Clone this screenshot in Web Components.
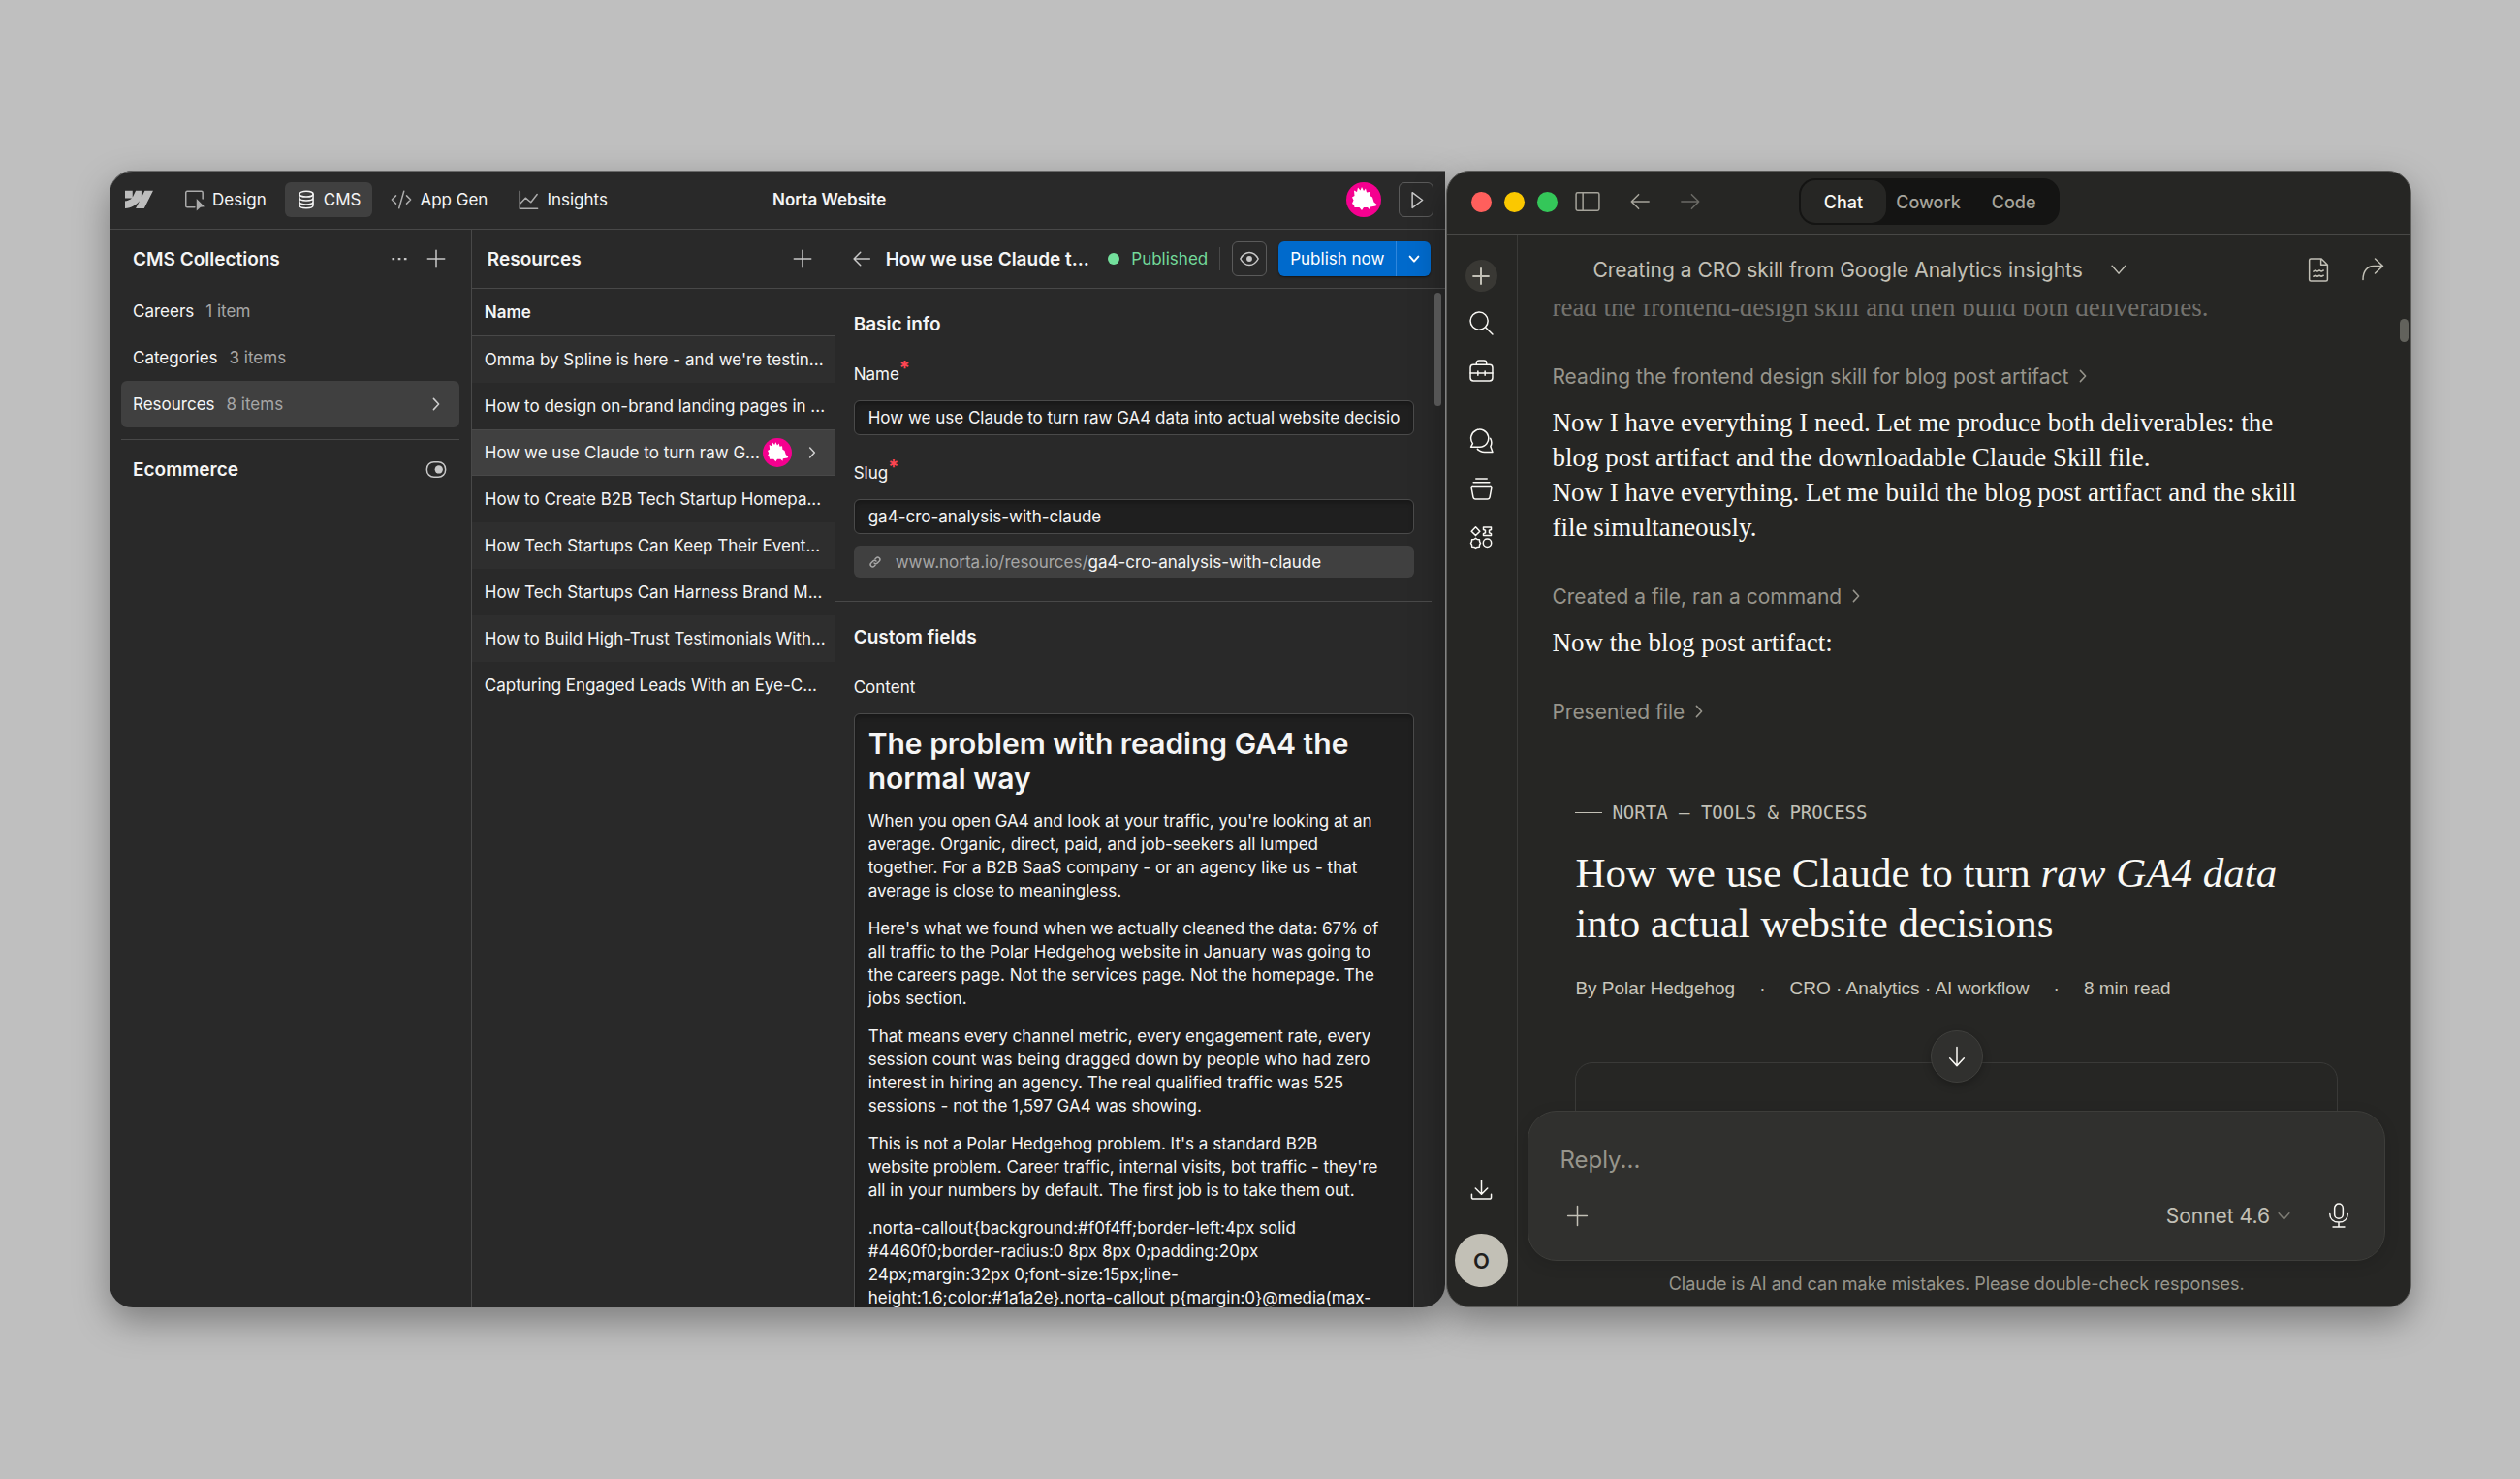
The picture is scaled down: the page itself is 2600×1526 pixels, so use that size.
<!DOCTYPE html>
<html lang="en">
<head>
<meta charset="utf-8">
<title>Norta Website</title>
<style>
  body {
    margin: 0;
    background: #bfbfbf;
    font-family: Inter, "Liberation Sans", sans-serif;
  }
  main {
    box-sizing: border-box;
    height: 100vh;
    padding: 176px 112px 177px 113px;
    display: grid;
    grid-template-columns: 1379fr 996fr;
    gap: 1px;
  }
</style>
</head>
<body>
<main>
  <cms-window></cms-window>
  <chat-window></chat-window>
</main>

<script>
const icons = {
  webflow: '<path fill="currentColor" stroke="none" transform="translate(0 4) scale(.0222)" d="M1080 0L735.386 673.684H411.695L555.916 394.481H549.445C430.464 548.934 252.942 650.61 0 673.684V398.344C0 398.344 161.813 388.787 256.938 288.776H0V0H288.771V237.515L295.252 237.489L413.255 0H631.645V236.009L638.126 235.999L760.556 0H1080Z"/>',
  design: '<path d="M13 20.500H4.500a1.500 1.500 0 0 1-1.500-1.500V4a1.500 1.500 0 0 1 1.500-1.500h16a1.500 1.500 0 0 1 1.500 1.500v7"/><path fill="currentColor" stroke="none" d="M15 11l9 9-4.500.5-4.500 4z"/>',
  database: '<ellipse cx="12" cy="5" rx="8.500" ry="3.500"/><path d="M3.500 5v14c0 2 3.800 3.500 8.500 3.500s8.500-1.500 8.500-3.500V5M3.500 9.700c0 2 3.800 3.500 8.500 3.500s8.500-1.500 8.500-3.500M3.500 14.400c0 2 3.800 3.500 8.500 3.500s8.500-1.500 8.500-3.500"/>',
  code: '<path d="M6 7.500L1.500 12 6 16.500M18 7.500l4.500 4.500-4.500 4.500M15 2.500L9.500 21.500"/>',
  chart: '<path d="M2.500 2.500v19.500h20M2.500 17l6.500-7 6 5 7-9"/>',
  play: '<path d="M7 3l12 9-12 9z"/>',
  dots: '<path fill="currentColor" stroke="none" d="M2 10.500h3.500v3H2zM10.300 10.500h3.500v3h-3.500zM18.500 10.500H22v3h-3.500z"/>',
  plus: '<path d="M12 2.500v19M2.500 12h19"/>',
  right: '<path d="M8.500 4.500l7 7.500-7 7.500"/>',
  down: '<path d="M4.500 8l7.500 8.500 7.500-8.500"/>',
  left: '<path d="M22 12H2.500M10.500 4l-8 8 8 8"/>',
  forward: '<path d="M2 12h19.500M13.500 4l8 8-8 8"/>',
  toggle: '<rect x="1.500" y="4" width="21" height="17" rx="8"/><circle cx="15" cy="12.500" r="4.500" fill="currentColor" stroke="none"/>',
  eye: '<path d="M2 12c2.500-4.700 6-7 10-7s7.500 2.300 10 7c-2.500 4.700-6 7-10 7s-7.500-2.300-10-7z"/><circle cx="12" cy="12" r="3.200" fill="currentColor" stroke="none"/>',
  link: '<path d="M10 14a4.500 4.500 0 0 0 6.500 0l4-4a4.600 4.600 0 0 0-6.500-6.500L12 5.500M14 10a4.500 4.500 0 0 0-6.500 0l-4 4a4.600 4.600 0 0 0 6.500 6.500l2-2"/>',
  panel: '<rect x="1" y="3.500" width="22" height="17" rx="1.500"/><path d="M7.500 3.500v17"/>',
  search: '<circle cx="9.700" cy="9.700" r="8.700"/><path d="M16 16l7 7"/>',
  briefcase: '<rect x="1" y="6" width="22" height="16" rx="3"/><path d="M7 6V4.500A2.500 2.500 0 0 1 9.500 2h5A2.500 2.500 0 0 1 17 4.500V6M1 14.500h22M8.500 12.500v4M15.500 12.500v4"/>',
  chats: '<path d="M1.500 17.500l1.800-3.500A8.700 8.700 0 1 1 10.500 17.500zM20.800 9c1.700 3 1.300 5.800.2 8l2 5.500H15c-3 0-5.500-1-7-3"/>',
  archive: '<path d="M6.500 2h11M4 5.500h16M3.500 9h17a1.500 1.500 0 0 1 1.500 1.700l-1.800 9.600a2 2 0 0 1-2 1.700H5.800a2 2 0 0 1-2-1.700L2 10.700A1.500 1.500 0 0 1 3.500 9z"/>',
  apps: '<path d="M6.500 1.800l4.300 4.400-4.300 4.400-4.300-4.400zM14.500 2h8v2.500l-2 .8v2.500l2 .8V10.500h-8V8.600l2-.8V5.300l-2-.8zM6.500 13.300l1.700 1.200 2.200.2.200 2.200.9 1.600-1 1.700-.2 2-2.100.2-1.700 1-1.700-1-2.100-.2-.2-2-1-1.700.9-1.600.2-2.200 2.200-.2z"/><circle cx="18.500" cy="18.300" r="4.200"/>',
  download: '<path d="M12 2v14.500M5.500 10.500l6.500 6.500 6.500-6.500M1.500 17v3a2 2 0 0 0 2 2h17a2 2 0 0 0 2-2v-3"/>',
  document: '<path d="M5 1h10.500l6 6v14.500a1.500 1.500 0 0 1-1.500 1.500H5a1.500 1.500 0 0 1-1.500-1.500v-19A1.500 1.500 0 0 1 5 1zM15 1.500V7h6M7.500 13.500l2-1 2 1 2-1 2 1 2-1M7.500 18.500l2-1 2 1 2-1 2 1 2-1"/>',
  share: '<path d="M2 22.500C2 14 6.500 8.500 13 8.500h9.500M14.500 1l8 7.500-8 7.500"/>',
  arrowdown: '<path d="M12 1.500v21M4 14l8 8.500 8-8.500"/>',
  mic: '<rect x="8" y="1" width="8" height="14" rx="4"/><path d="M3.500 10.500c0 5 3.500 8 8.500 8s8.500-3 8.500-8M12 18.500V23M6.500 23h11"/>',
  hedgehog: '<circle cx="12" cy="12" r="12" fill="#f5008f" stroke="none"/><path fill="#fff" stroke="none" transform="scale(.6667)" d="M8 8.500L11 10 12 5.500 14.500 8.500 16 5 18 9 20 6.500 21 10.500 24 10 24.500 14 27 15.500 28.500 20.500 31.500 23 30.500 24.500 25 25.500 24.500 28.500 22 26H18L16 29 13.500 26H8.500L8 23.500 6 22 7.500 18.500 6 15.500 8.500 14Z"/>'
};

class AppIcon extends HTMLElement {
  constructor() {
    super();
    this.attachShadow({ mode: 'open' });
  }
  connectedCallback() {
    const size = this.getAttribute('size') || 24;
    // keeps the drawn line near the wanted thickness at any size
    const stroke = (this.getAttribute('line') || 1.5) * 24 / size;
    this.shadowRoot.innerHTML = `
      <style>
        :host { display: inline-flex; flex: none; }
        svg { display: block; overflow: visible; fill: none; stroke: currentColor; stroke-linejoin: round; stroke-linecap: round; }
      </style>
      <svg width="${size}" height="${size}" viewBox="0 0 24 24" stroke-width="${stroke}" aria-hidden="true">${icons[this.getAttribute('name')]}</svg>
    `;
  }
}
customElements.define('app-icon', AppIcon);

class CmsTopbar extends HTMLElement {
  constructor() {
    super();
    this.attachShadow({ mode: 'open' });
  }
  connectedCallback() {
    this.shadowRoot.innerHTML = `
      <style>
        :host {
          display: grid;
          grid-template-columns: 684fr auto 577fr;
          align-items: center;
          height: 60px;
          border-bottom: 1px solid #484848;
        }
        nav, .actions { display: flex; align-items: center; }
        nav { gap: 7px; padding-left: 16px; }
        .logo { color: #bdbdbd; margin-right: 12px; display: flex; }
        nav button {
          display: flex;
          align-items: center;
          gap: 8px;
          height: 36px;
          padding: 0 12px;
          border: 0;
          border-radius: 6px;
          background: none;
          color: #f5f5f5;
          font: 17px Inter, sans-serif;
        }
        nav button app-icon { color: #ababab; }
        nav button[aria-current] { background: #404040; }
        nav button[aria-current] app-icon { color: #f5f5f5; }
        h1 { margin: 0; font-size: 17px; font-weight: 600; }
        .actions { justify-content: flex-end; gap: 18px; padding-right: 12px; }
        .play {
          display: grid;
          place-items: center;
          width: 36px;
          height: 36px;
          padding: 0;
          border: 1px solid #5a5a5a;
          border-radius: 6px;
          background: none;
          color: #c8c8c8;
        }
      </style>
      <nav>
        <a class="logo" href="#" aria-label="Home"><app-icon name="webflow" size="29"></app-icon></a>
        <button><app-icon name="design" size="22"></app-icon>Design</button>
        <button aria-current="page"><app-icon name="database" size="20"></app-icon>CMS</button>
        <button><app-icon name="code" size="22"></app-icon>App Gen</button>
        <button><app-icon name="chart" size="22"></app-icon>Insights</button>
      </nav>
      <h1>Norta Website</h1>
      <div class="actions">
        <app-icon name="hedgehog" size="36"></app-icon>
        <button class="play" aria-label="Preview"><app-icon name="play" size="21"></app-icon></button>
      </div>
    `;
  }
}
customElements.define('cms-topbar', CmsTopbar);

class PanelHeader extends HTMLElement {
  constructor() {
    super();
    this.attachShadow({ mode: 'open' });
  }
  connectedCallback() {
    this.shadowRoot.innerHTML = `
      <style>
        :host { display: flex; align-items: center; height: 60px; gap: 18px; }
        h2 { margin: 0; flex: 1; font-size: 19px; font-weight: 600; }
      </style>
      <h2><slot></slot></h2>
      <slot name="actions"></slot>
    `;
  }
}
customElements.define('panel-header', PanelHeader);

class CollectionItem extends HTMLElement {
  constructor() {
    super();
    this.attachShadow({ mode: 'open' });
  }
  connectedCallback() {
    this.shadowRoot.innerHTML = `
      <style>
        :host { display: block; }
        a {
          display: flex;
          align-items: center;
          gap: 12px;
          height: 48px;
          padding: 0 15px 0 12px;
          border-radius: 6px;
          color: #f5f5f5;
          font-size: 17px;
          text-decoration: none;
        }
        span { flex: 1; color: #a6a6a6; }
        app-icon { display: none; color: #d0d0d0; }
        :host([selected]) a { background: #404040; }
        :host([selected]) app-icon { display: flex; }
      </style>
      <a href="#"><slot></slot><span>${this.getAttribute('count')}</span><app-icon name="right" size="18"></app-icon></a>
    `;
  }
}
customElements.define('collection-item', CollectionItem);

class CollectionSidebar extends HTMLElement {
  constructor() {
    super();
    this.attachShadow({ mode: 'open' });
  }
  connectedCallback() {
    this.shadowRoot.innerHTML = `
      <style>
        :host { display: block; padding: 0 12px; border-right: 1px solid #484848; }
        button { display: flex; padding: 0; border: 0; background: none; color: #c8c8c8; }
        panel-header { padding: 0 13px 0 12px; }
        hr { margin: 12px 0 0; border: 0; border-top: 1px solid #484848; }
      </style>
      <panel-header>CMS Collections
        <button slot="actions" aria-label="More"><app-icon name="dots" size="18"></app-icon></button>
        <button slot="actions" aria-label="New collection"><app-icon name="plus" size="22"></app-icon></button>
      </panel-header>
      <collection-item count="1 item">Careers</collection-item>
      <collection-item count="3 items">Categories</collection-item>
      <collection-item count="8 items" selected>Resources</collection-item>
      <hr>
      <panel-header>Ecommerce
        <button slot="actions" aria-label="Enable ecommerce"><app-icon name="toggle" size="22"></app-icon></button>
      </panel-header>
    `;
  }
}
customElements.define('collection-sidebar', CollectionSidebar);

class EntryTable extends HTMLElement {
  constructor() {
    super();
    this.attachShadow({ mode: 'open' });
  }
  connectedCallback() {
    const rows = [
      "Omma by Spline is here - and we're testin...",
      'How to design on-brand landing pages in ...',
      'How we use Claude to turn raw G...',
      'How to Create B2B Tech Startup Homepa...',
      'How Tech Startups Can Keep Their Event...',
      'How Tech Startups Can Harness Brand M...',
      'How to Build High-Trust Testimonials With...',
      'Capturing Engaged Leads With an Eye-C...'
    ];
    const selected = 2;
    this.shadowRoot.innerHTML = `
      <style>
        :host { display: block; overflow: hidden; border-right: 1px solid #484848; }
        panel-header { padding: 0 22px 0 16px; border-bottom: 1px solid #484848; }
        button { display: flex; padding: 0; border: 0; background: none; color: #c8c8c8; }
        table { width: 100%; border-collapse: collapse; table-layout: fixed; font-size: 17px; }
        th, td { height: 48px; padding: 0 9px 0 13px; text-align: left; font-weight: 400; white-space: nowrap; }
        thead th { font-weight: 600; border-bottom: 1px solid #484848; }
        tbody tr:nth-child(odd) { background: #2e2e2e; }
        tbody tr.selected { background: #404040; box-shadow: inset 0 1px #484848, inset 0 -1px #484848; }
        .cell { display: flex; align-items: center; gap: 3px; }
        .next { margin: 0 6px 0 auto; color: #d0d0d0; }
      </style>
      <panel-header>Resources
        <button slot="actions" aria-label="New item"><app-icon name="plus" size="22"></app-icon></button>
      </panel-header>
      <table>
        <thead><tr><th>Name</th></tr></thead>
        <tbody>
          ${rows.map((text, i) => i === selected
            ? `<tr class="selected"><td><div class="cell">${text}<app-icon name="hedgehog" size="30"></app-icon><app-icon class="next" name="right" size="16"></app-icon></div></td></tr>`
            : `<tr><td>${text}</td></tr>`).join('')}
        </tbody>
      </table>
    `;
  }
}
customElements.define('entry-table', EntryTable);

class TextField extends HTMLElement {
  constructor() {
    super();
    this.attachShadow({ mode: 'open' });
  }
  connectedCallback() {
    this.shadowRoot.innerHTML = `
      <style>
        :host { display: block; }
        label { display: block; height: 24px; line-height: 24px; font-size: 17px; }
        sup { color: #ff4552; font-size: 20px; font-weight: 700; line-height: 0; vertical-align: 5px; }
        input {
          display: block;
          box-sizing: border-box;
          width: 100%;
          height: 36px;
          margin-top: 15px;
          padding: 0 14px;
          border: 1px solid #4a4a4a;
          border-radius: 6px;
          background: #1f1f1f;
          box-shadow: inset 0 3px 4px rgba(0, 0, 0, .25);
          color: #f5f5f5;
          font: 17px Inter, sans-serif;
        }
      </style>
      <label for="field">${this.getAttribute('label')}<sup>*</sup></label>
      <input id="field" type="text" value="${this.getAttribute('value')}">
    `;
  }
}
customElements.define('text-field', TextField);

class EntryEditor extends HTMLElement {
  constructor() {
    super();
    this.attachShadow({ mode: 'open' });
  }
  connectedCallback() {
    this.shadowRoot.innerHTML = `
      <style>
        :host { display: flex; flex-direction: column; min-width: 0; min-height: 0; }
        header {
          display: flex;
          align-items: center;
          flex: none;
          height: 60px;
          padding: 0 15px 0 17px;
          border-bottom: 1px solid #484848;
        }
        button { padding: 0; border: 0; background: none; color: #c8c8c8; font: 17px Inter, sans-serif; }
        .back { display: flex; }
        h2 { margin: 0 auto 0 15px; font-size: 19px; font-weight: 600; white-space: nowrap; }
        .status { display: flex; align-items: center; gap: 12px; color: #73d999; font-size: 17px; }
        .status::before { content: ""; width: 12px; height: 12px; border-radius: 50%; background: #73e09c; }
        .eye {
          display: grid;
          place-items: center;
          width: 36px;
          height: 36px;
          margin: 0 12px;
          border: 1px solid #5a5a5a;
          border-radius: 6px;
        }
        .line { width: 1px; height: 24px; margin-left: 12px; background: #484848; }
        .publish { display: flex; height: 36px; border-radius: 6px; background: #006acc; box-shadow: 0 1px 2px rgba(0, 0, 0, .5); }
        .publish button { color: #fff; padding: 0 12px; }
        .publish .menu { display: grid; place-items: center; width: 36px; padding: 0; border-left: 1px solid #2f86dc; }
        .body { position: relative; flex: 1; overflow: hidden; }
        .scroll { position: absolute; top: 4px; right: 4px; width: 7px; height: 117px; border-radius: 4px; background: #555; }
        section { margin-right: 14px; padding: 25px 18px 0 19px; }
        section + section { border-top: 1px solid #484848; }
        h3 { margin: 0 0 27px; font-size: 19px; line-height: 24px; font-weight: 600; }
        text-field + text-field { margin-top: 27px; }
        .url {
          display: flex;
          align-items: center;
          height: 33px;
          margin: 12px 0 24px;
          padding: 0 16px;
          border-radius: 6px;
          background: #404040;
          color: #a6a6a6;
          font-size: 17px;
          text-decoration: none;
        }
        .url app-icon { margin-right: 15px; }
        .url b { color: #f5f5f5; font-weight: 400; }
        .label { font-size: 17px; line-height: 24px; }
        .rich {
          margin-top: 15px;
          padding: 12px 14px;
          border: 1px solid #4a4a4a;
          border-radius: 6px;
          background: #1f1f1f;
          box-shadow: inset 0 3px 4px rgba(0, 0, 0, .25);
          font-size: 17px;
          line-height: 24px;
        }
        .rich h4 { margin: 0 0 14px; font-size: 30px; line-height: 36px; font-weight: 600; }
        .rich p { margin: 0 0 15px; }
      </style>
      <header>
        <button class="back" aria-label="Back"><app-icon name="left" size="20"></app-icon></button>
        <h2>How we use Claude t...</h2>
        <span class="status">Published</span>
        <span class="line"></span>
        <button class="eye" aria-label="Preview item"><app-icon name="eye" size="22"></app-icon></button>
        <div class="publish">
          <button>Publish now</button>
          <button class="menu" aria-label="Publish options"><app-icon name="down" size="14" line="2"></app-icon></button>
        </div>
      </header>
      <div class="body">
        <section>
          <h3>Basic info</h3>
          <text-field label="Name" value="How we use Claude to turn raw GA4 data into actual website decisions"></text-field>
          <text-field label="Slug" value="ga4-cro-analysis-with-claude"></text-field>
          <a class="url" href="#"><app-icon name="link" size="12"></app-icon>www.norta.io/resources/<b>ga4-cro-analysis-with-claude</b></a>
        </section>
        <section>
          <h3>Custom fields</h3>
          <div class="label" id="content-label">Content</div>
          <div class="rich" role="textbox" aria-multiline="true" aria-labelledby="content-label">
            <h4>The problem with reading GA4 the normal way</h4>
            <p>When you open GA4 and look at your traffic, you're looking at an<br>average. Organic, direct, paid, and job-seekers all lumped<br>together. For a B2B SaaS company - or an agency like us - that<br>average is close to meaningless.</p>
            <p>Here's what we found when we actually cleaned the data: 67% of<br>all traffic to the Polar Hedgehog website in January was going to<br>the careers page. Not the services page. Not the homepage. The<br>jobs section.</p>
            <p>That means every channel metric, every engagement rate, every<br>session count was being dragged down by people who had zero<br>interest in hiring an agency. The real qualified traffic was 525<br>sessions - not the 1,597 GA4 was showing.</p>
            <p>This is not a Polar Hedgehog problem. It's a standard B2B<br>website problem. Career traffic, internal visits, bot traffic - they're<br>all in your numbers by default. The first job is to take them out.</p>
            <p>.norta-callout{background:#f0f4ff;border-left:4px solid<br>#4460f0;border-radius:0 8px 8px 0;padding:20px<br>24px;margin:32px 0;font-size:15px;line-<br>height:1.6;color:#1a1a2e}.norta-callout p{margin:0}@media(max-</p>
          </div>
        </section>
        <div class="scroll"></div>
      </div>
    `;
  }
}
customElements.define('entry-editor', EntryEditor);

class CmsWindow extends HTMLElement {
  constructor() {
    super();
    this.attachShadow({ mode: 'open' });
  }
  connectedCallback() {
    this.shadowRoot.innerHTML = `
      <style>
        :host {
          display: flex;
          flex-direction: column;
          min-width: 0;
          min-height: 0;
          overflow: hidden;
          border-radius: 24px 0 24px 24px;
          background: #292929;
          box-shadow: 0 14px 36px rgba(0, 0, 0, .35), inset 0 1px #6a6a6a;
          color: #f5f5f5;
        }
        .columns { flex: 1; display: grid; grid-template-columns: 374fr 375fr 630fr; min-height: 0; }
      </style>
      <cms-topbar></cms-topbar>
      <div class="columns">
        <collection-sidebar></collection-sidebar>
        <entry-table></entry-table>
        <entry-editor></entry-editor>
      </div>
    `;
  }
}
customElements.define('cms-window', CmsWindow);

class ChatTopbar extends HTMLElement {
  constructor() {
    super();
    this.attachShadow({ mode: 'open' });
  }
  connectedCallback() {
    this.shadowRoot.innerHTML = `
      <style>
        :host {
          display: grid;
          grid-template-columns: 1fr auto 1fr;
          align-items: center;
          height: 62px;
          padding-bottom: 2px;
          border-bottom: 1px solid #484846;
        }
        .left { display: flex; align-items: center; padding-left: 25px; }
        .light { width: 21px; height: 21px; margin-right: 13px; border-radius: 50%; background: var(--light); }
        button { padding: 0; border: 0; background: none; font: 500 18px Inter, sans-serif; color: #a6a49b; }
        .left button { display: flex; }
        .panel { margin: 0 30px 0 5px; }
        .back { margin-right: 30px; }
        .fwd { color: #6b6a65; }
        .tabs { display: flex; padding: 2px; border-radius: 17px; background: #141413; }
        .tabs button { height: 44px; padding: 0 16px; border-radius: 15px; }
        .tabs .on { padding: 0 24px; background: #262624; color: #faf9f5; }
        .tabs .on + button { padding-left: 10px; }
        .tabs button:last-child { padding-right: 22px; }
      </style>
      <div class="left">
        <span class="light" style="--light: #ff5f5c"></span>
        <span class="light" style="--light: #fbc800"></span>
        <span class="light" style="--light: #34c759"></span>
        <button class="panel" aria-label="Toggle sidebar"><app-icon name="panel" size="26"></app-icon></button>
        <button class="back" aria-label="Back"><app-icon name="left" size="22"></app-icon></button>
        <button class="fwd" aria-label="Forward"><app-icon name="forward" size="22"></app-icon></button>
      </div>
      <div class="tabs">
        <button class="on">Chat</button><button>Cowork</button><button>Code</button>
      </div>
    `;
  }
}
customElements.define('chat-topbar', ChatTopbar);

class ChatRail extends HTMLElement {
  constructor() {
    super();
    this.attachShadow({ mode: 'open' });
  }
  connectedCallback() {
    this.shadowRoot.innerHTML = `
      <style>
        :host {
          display: flex;
          flex-direction: column;
          align-items: center;
          padding: 26px 2px 20px 0;
          border-right: 1px solid #3a3a38;
        }
        button { display: flex; justify-content: center; align-items: center; width: 33px; height: 33px; margin-bottom: 16px; padding: 0; border: 0; background: none; color: #faf9f5; }
        .new { border-radius: 50%; background: #393834; color: #c2c0b6; }
        .space { margin-bottom: 40px; }
        .download { margin: auto 0 29px; }
        .user { width: 55px; height: 55px; margin: 0; border-radius: 50%; background: #c2c0b6; color: #1f1e1d; font: 600 22px Inter, sans-serif; }
      </style>
      <button class="new" aria-label="New chat"><app-icon name="plus" size="20" line="2"></app-icon></button>
      <button aria-label="Search"><app-icon name="search" size="25"></app-icon></button>
      <button class="space" aria-label="Customize"><app-icon name="briefcase" size="25"></app-icon></button>
      <button aria-label="Chats"><app-icon name="chats" size="25"></app-icon></button>
      <button aria-label="Projects"><app-icon name="archive" size="25"></app-icon></button>
      <button aria-label="Artifacts"><app-icon name="apps" size="24"></app-icon></button>
      <button class="download" aria-label="Download"><app-icon name="download" size="23"></app-icon></button>
      <button class="user">O</button>
    `;
  }
}
customElements.define('chat-rail', ChatRail);

class ToolStep extends HTMLElement {
  constructor() {
    super();
    this.attachShadow({ mode: 'open' });
  }
  connectedCallback() {
    this.shadowRoot.innerHTML = `
      <style>
        :host { display: block; margin: 38px 0 15px; }
        button { display: flex; align-items: center; gap: 6px; height: 30px; padding: 0; border: 0; background: none; color: #97958c; font: 21px Inter, sans-serif; }
      </style>
      <button><slot></slot><app-icon name="right" size="18"></app-icon></button>
    `;
  }
}
customElements.define('tool-step', ToolStep);

class BlogArtifact extends HTMLElement {
  constructor() {
    super();
    this.attachShadow({ mode: 'open' });
  }
  connectedCallback() {
    this.shadowRoot.innerHTML = `
      <style>
        :host { display: block; margin: 77px 49px 0 24px; }
        .kicker { display: flex; align-items: center; gap: 10px; margin: 0; color: #c2c0b6; font: 19px/24px "DejaVu Sans Mono", monospace; }
        .kicker::before { content: ""; width: 28px; height: 1px; background: #c2c0b6; }
        h2 { margin: 25px 0 29px; color: #faf9f5; font: 43px/52px "Liberation Serif", serif; }
        .meta { display: flex; gap: 25px; color: #c9c7bc; font: 19px/24px "Liberation Sans", sans-serif; }
        .card { height: 120px; margin-top: 64px; border: 1px solid #3a3a38; border-radius: 18px; }
      </style>
      <p class="kicker">NORTA — TOOLS &amp; PROCESS</p>
      <h2>How we use Claude to turn <em>raw GA4 data</em><br>into actual website decisions</h2>
      <div class="meta"><span>By Polar Hedgehog</span><span>·</span><span>CRO · Analytics · AI workflow</span><span>·</span><span>8 min read</span></div>
      <div class="card"></div>
    `;
  }
}
customElements.define('blog-artifact', BlogArtifact);

class ChatComposer extends HTMLElement {
  constructor() {
    super();
    this.attachShadow({ mode: 'open' });
  }
  connectedCallback() {
    this.shadowRoot.innerHTML = `
      <style>
        :host { display: block; padding: 0 26px 0 10px; }
        form {
          box-sizing: border-box;
          height: 155px;
          padding: 31px 34px 0 32px;
          border: 1px solid #3d3d3a;
          border-radius: 30px;
          background: #30302e;
          box-shadow: 0 4px 16px rgba(0, 0, 0, .12);
        }
        input { display: block; width: 100%; height: 36px; padding: 0; border: 0; background: none; color: #faf9f5; font: 24px Inter, sans-serif; }
        input::placeholder { color: #97958c; opacity: 1; }
        .row { display: flex; align-items: center; margin-top: 20px; padding-left: 6px; }
        button { display: flex; align-items: center; gap: 6px; height: 40px; padding: 0; border: 0; background: none; color: #c2c0b6; font: 21px Inter, sans-serif; }
        .model { margin: 0 35px 0 auto; }
        .model app-icon { color: #7d7b74; }
        .mic { color: #faf9f5; }
        p { margin: 12px 0 11px; text-align: center; color: #97958c; font-size: 18px; line-height: 24px; }
      </style>
      <form>
        <input type="text" placeholder="Reply..." aria-label="Reply">
        <div class="row">
          <button type="button" aria-label="Add"><app-icon name="plus" size="25"></app-icon></button>
          <button type="button" class="model">Sonnet 4.6<app-icon name="down" size="17"></app-icon></button>
          <button type="button" class="mic" aria-label="Dictate"><app-icon name="mic" size="26"></app-icon></button>
        </div>
      </form>
      <p>Claude is AI and can make mistakes. Please double-check responses.</p>
    `;
  }
}
customElements.define('chat-composer', ChatComposer);

class ChatThread extends HTMLElement {
  constructor() {
    super();
    this.attachShadow({ mode: 'open' });
  }
  connectedCallback() {
    this.shadowRoot.innerHTML = `
      <style>
        :host { display: flex; flex-direction: column; min-width: 0; min-height: 0; }
        header { display: flex; align-items: center; height: 72px; padding: 0 27px 0 77px; color: #c2c0b6; }
        button { display: flex; align-items: center; padding: 0; border: 0; background: none; color: inherit; font: 21px Inter, sans-serif; }
        .title { gap: 26px; margin-right: auto; }
        .doc { margin-right: 32px; }
        .area { position: relative; flex: 1; min-height: 0; }
        .log { height: 100%; overflow: hidden; }
        .log > div { margin: -15px 26px 0 35px; }
        p { margin: 0; color: #faf9f5; font: 27px/36px "Liberation Serif", serif; white-space: nowrap; }
        .faded { color: #73726e; }
        .scroll { position: absolute; top: 15px; right: 2px; width: 9px; height: 24px; border-radius: 5px; background: #62625c; }
        .jump {
          position: absolute;
          bottom: 29px;
          left: calc(50% - 35px);
          justify-content: center;
          width: 54px;
          height: 54px;
          border: 1px solid #40403d;
          border-radius: 50%;
          background: #30302e;
          box-shadow: 0 3px 8px rgba(0, 0, 0, .25);
          color: #faf9f5;
        }
      </style>
      <header>
        <button class="title">Creating a CRO skill from Google Analytics insights<app-icon name="down" size="22"></app-icon></button>
        <button class="doc" aria-label="Open file"><app-icon name="document" size="25"></app-icon></button>
        <button aria-label="Share"><app-icon name="share" size="24"></app-icon></button>
      </header>
      <div class="area">
        <div class="log">
          <div>
            <p class="faded">read the frontend-design skill and then build both deliverables.</p>
            <tool-step>Reading the frontend design skill for blog post artifact</tool-step>
            <p>Now I have everything I need. Let me produce both deliverables: the<br>blog post artifact and the downloadable Claude Skill file.<br>Now I have everything. Let me build the blog post artifact and the skill<br>file simultaneously.</p>
            <tool-step>Created a file, ran a command</tool-step>
            <p>Now the blog post artifact:</p>
            <tool-step>Presented file</tool-step>
            <blog-artifact></blog-artifact>
          </div>
        </div>
        <div class="scroll"></div>
        <button class="jump" aria-label="Scroll to bottom"><app-icon name="arrowdown" size="22"></app-icon></button>
      </div>
      <chat-composer></chat-composer>
    `;
  }
}
customElements.define('chat-thread', ChatThread);

class ChatWindow extends HTMLElement {
  constructor() {
    super();
    this.attachShadow({ mode: 'open' });
  }
  connectedCallback() {
    this.shadowRoot.innerHTML = `
      <style>
        :host {
          display: flex;
          flex-direction: column;
          min-width: 0;
          min-height: 0;
          overflow: hidden;
          border: 1px solid #5c5c5a;
          border-radius: 24px;
          background: #262624;
          box-shadow: 0 14px 36px rgba(0, 0, 0, .35);
        }
        .columns { flex: 1; display: grid; grid-template-columns: 73px 1fr; min-height: 0; }
      </style>
      <chat-topbar></chat-topbar>
      <div class="columns">
        <chat-rail></chat-rail>
        <chat-thread></chat-thread>
      </div>
    `;
  }
}
customElements.define('chat-window', ChatWindow);
</script>
</body>
</html>
